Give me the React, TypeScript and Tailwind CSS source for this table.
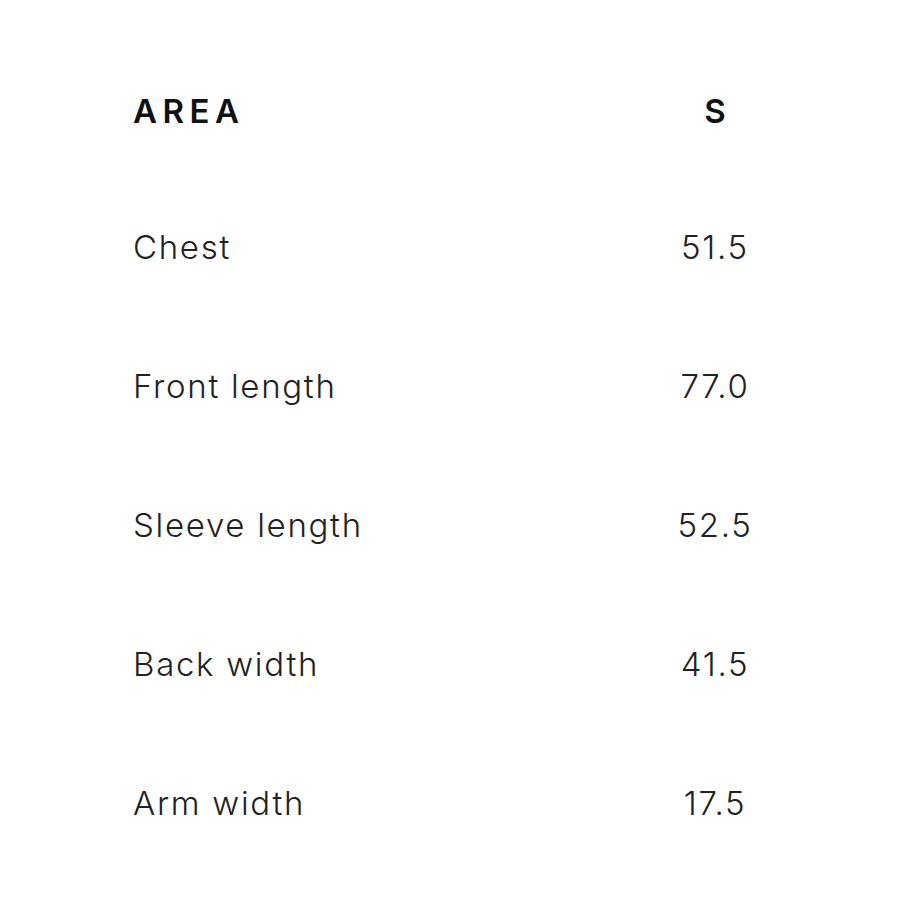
const rows: { area: string; s: string }[] = [
  { area: "Chest", s: "51.5" },
  { area: "Front length", s: "77.0" },
  { area: "Sleeve length", s: "52.5" },
  { area: "Back width", s: "41.5" },
  { area: "Arm width", s: "17.5" },
];

export default function App() {
  return (
    <div className="w-[900px] h-[900px] bg-white pl-[133px] pt-[45px] font-['Inter',_'Liberation_Sans',_sans-serif]">
      <div className="grid grid-cols-[522px_120px] h-[133px] items-center">
        <div className="text-[33px] font-semibold tracking-[5.5px] text-[#111]">AREA</div>
        <div className="text-[33px] font-semibold text-[#111] text-center">S</div>
      </div>
      {rows.map((r) => (
        <div key={r.area} className="grid grid-cols-[522px_120px] h-[139px] items-center">
          <div className="text-[33px] font-light tracking-[1.7px] text-[#222]">{r.area}</div>
          <div className="text-[33px] font-light tracking-[1.7px] text-[#222] text-center">{r.s}</div>
        </div>
      ))}
    </div>
  );
}
